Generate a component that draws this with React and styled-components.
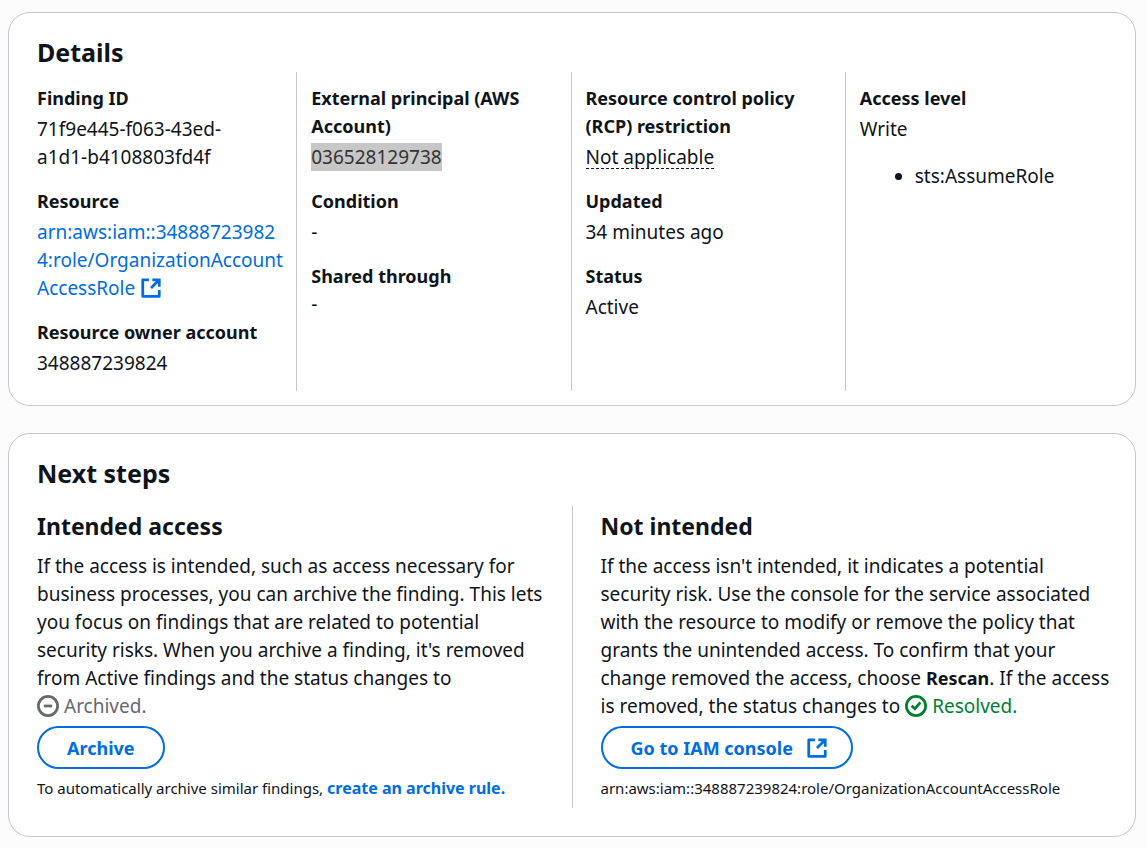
import React from "react";
import styled, { createGlobalStyle } from "styled-components";

const GlobalStyle = createGlobalStyle`
  *, *::before, *::after { box-sizing: border-box; }
  body {
    margin: 0;
    background: #fcfcfd;
    color: #0f141a;
    font-family: "Noto Sans", "Open Sans", sans-serif;
    font-size: 19px;
    line-height: 28px;
  }
`;

const Page = styled.main`
  display: flex;
  flex-direction: column;
  gap: 27px;
  padding: 12px 10px 12px 8px;
`;

const Card = styled.section`
  border: 1px solid #c6c6cd;
  border-radius: 22px;
  background: #ffffff;
  padding: ${(p) => p.$padding};
`;

const CardTitle = styled.h2`
  margin: 0;
  padding: 0 15px;
  font-size: 25px;
  line-height: 32px;
  font-weight: 700;
`;

const Columns = styled.div`
  display: grid;
  grid-template-columns: repeat(${(p) => p.$count}, minmax(0, 1fr));
  margin-top: ${(p) => p.$top};
`;

const DetailColumn = styled.dl`
  margin: 0;
  display: flex;
  flex-direction: column;
  gap: 16px;
  padding: 12px 13px 14px 14px;
  border-left: 1px solid #c6c6cd;

  &:first-child { border-left-color: transparent; }
`;

const Pair = styled.div`
  display: flex;
  flex-direction: column;
  align-items: flex-start;
  gap: ${(p) => (p.$tight ? "0" : "3px")};
`;

const Label = styled.dt`
  font-size: 18px;
  font-weight: 700;
`;

const Value = styled.dd`
  margin: 0;
`;

const Selected = styled.span`
  display: inline-block;
  background: #c7c7c7;
  color: #333333;
`;

const Hint = styled.span`
  display: inline-block;
  line-height: 22px;
  border-bottom: 1px dashed #0f141a;
`;

const Link = styled.a`
  color: #006ce0;
  text-decoration: none;
`;

const StrongLink = styled(Link)`
  font-size: 16px;
  font-weight: 700;
`;

const ActionList = styled.ul`
  margin: 19px 0 0;
  padding-left: 55px;
`;

const StepColumn = styled.article`
  display: flex;
  flex-direction: column;
  align-items: flex-start;
  padding: 4px 28px 6px 14px;
  border-left: 1px solid transparent;

  & + & {
    padding-left: 28px;
    padding-right: 8px;
    border-left-color: #c6c6cd;
  }
`;

const StepTitle = styled.h3`
  margin: 0 0 10px;
  font-size: 23px;
  line-height: 32px;
  font-weight: 700;
`;

const Text = styled.p`
  margin: 0;

  b { font-size: 18px; }
`;

const SmallText = styled.p`
  margin: 5px 0 0;
  font-size: 15px;
`;

const Status = styled.span`
  display: inline-flex;
  align-items: center;
  gap: 5px;
  vertical-align: top;
  color: ${(p) => p.$color};
`;

const Button = styled.button`
  display: inline-flex;
  align-items: center;
  gap: 13px;
  height: 43px;
  margin-top: 6px;
  padding: 0 ${(p) => (p.$withIcon ? "23px" : "28px")} 0 28px;
  border: 2px solid #006ce0;
  border-radius: 22px;
  background: #ffffff;
  color: #006ce0;
  font: inherit;
  font-size: 18px;
  font-weight: 700;
  cursor: pointer;
`;

const Icon = styled.svg`
  width: 22px;
  height: 22px;
  flex: none;
  fill: none;
  stroke: currentColor;
  stroke-width: 2;
  vertical-align: ${(p) => (p.$inline ? "-4px" : "baseline")};
`;

function ExternalIcon({ inline }) {
  return (
    <Icon viewBox="0 0 16 16" aria-hidden="true" $inline={inline}>
      <path d="M14 9.5V14H2V2h4.5" strokeLinejoin="round" />
      <path d="M9 2h5v5M14 2L8 8" />
    </Icon>
  );
}

function ArchivedIcon() {
  return (
    <Icon viewBox="0 0 16 16" aria-hidden="true">
      <circle cx="8" cy="8" r="7" />
      <path d="M5 8h6" />
    </Icon>
  );
}

function ResolvedIcon() {
  return (
    <Icon viewBox="0 0 16 16" aria-hidden="true">
      <circle cx="8" cy="8" r="7" />
      <path d="M4.8 7.8l2.4 2.2 4-4.6" />
    </Icon>
  );
}

function Field({ label, tight, children }) {
  return (
    <Pair $tight={tight}>
      <Label>{label}</Label>
      <Value>{children}</Value>
    </Pair>
  );
}

export default function App() {
  return (
    <>
      <GlobalStyle />
      <Page>
        <Card $padding="23px 16px 14px 13px">
          <CardTitle>Details</CardTitle>
          <Columns $count={4} $top="4px">
            <DetailColumn>
              <Field label="Finding ID">
                71f9e445-f063-43ed-
                <br />
                a1d1-b4108803fd4f
              </Field>
              <Field label="Resource">
                <Link href="#resource">
                  arn:aws:iam::34888723982
                  <br />
                  4:role/OrganizationAccount
                  <br />
                  AccessRole <ExternalIcon inline />
                </Link>
              </Field>
              <Field label="Resource owner account">348887239824</Field>
            </DetailColumn>
            <DetailColumn>
              <Field label="External principal (AWS Account)">
                <Selected>036528129738</Selected>
              </Field>
              <Field label="Condition">-</Field>
              <Field label="Shared through" tight>-</Field>
            </DetailColumn>
            <DetailColumn>
              <Field label="Resource control policy (RCP) restriction">
                <Hint>Not applicable</Hint>
              </Field>
              <Field label="Updated">34 minutes ago</Field>
              <Field label="Status">Active</Field>
            </DetailColumn>
            <DetailColumn>
              <Field label="Access level">
                Write
                <ActionList>
                  <li>sts:AssumeRole</li>
                </ActionList>
              </Field>
            </DetailColumn>
          </Columns>
        </Card>

        <Card $padding="23px 14px 28px 13px">
          <CardTitle>Next steps</CardTitle>
          <Columns $count={2} $top="17px">
            <StepColumn>
              <StepTitle>Intended access</StepTitle>
              <Text>
                If the access is intended, such as access necessary for
                <br />
                business processes, you can archive the finding. This lets
                <br />
                you focus on findings that are related to potential
                <br />
                security risks. When you archive a finding, it's removed
                <br />
                from Active findings and the status changes to
                <br />
                <Status $color="#656871">
                  <ArchivedIcon />
                  Archived.
                </Status>
              </Text>
              <Button type="button">Archive</Button>
              <SmallText>
                To automatically archive similar findings,{" "}
                <StrongLink href="#archive-rule">create an archive rule.</StrongLink>
              </SmallText>
            </StepColumn>
            <StepColumn>
              <StepTitle>Not intended</StepTitle>
              <Text>
                If the access isn't intended, it indicates a potential
                <br />
                security risk. Use the console for the service associated
                <br />
                with the resource to modify or remove the policy that
                <br />
                grants the unintended access. To confirm that your
                <br />
                change removed the access, choose <b>Rescan</b>. If the access
                <br />
                is removed, the status changes to{" "}
                <Status $color="#00802f">
                  <ResolvedIcon />
                  Resolved.
                </Status>
              </Text>
              <Button type="button" $withIcon>
                Go to IAM console
                <ExternalIcon />
              </Button>
              <SmallText>
                arn:aws:iam::348887239824:role/OrganizationAccountAccessRole
              </SmallText>
            </StepColumn>
          </Columns>
        </Card>
      </Page>
    </>
  );
}
